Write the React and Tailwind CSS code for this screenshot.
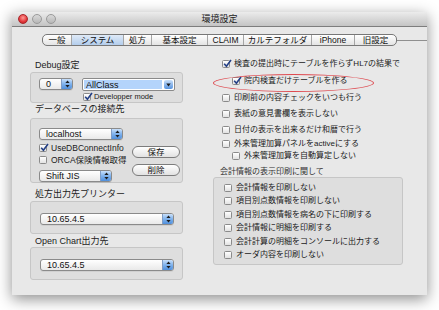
import React from "react";

function Arrows() {
  return (
    <svg width="5" height="8" viewBox="0 0 5 8">
      <path d="M2.5 0.5 L4.6 3 L0.4 3 Z" fill="#1b1b1b" />
      <path d="M2.5 7.5 L4.6 5 L0.4 5 Z" fill="#1b1b1b" />
    </svg>
  );
}

function Popup({ label, className }) {
  return (
    <div
      className={`flex h-[12px] items-stretch rounded-[3px] border border-[#8a8a8a] bg-gradient-to-b from-white to-[#e9e9e9] shadow-[0_1px_0_rgba(0,0,0,0.06)] ${className}`}
    >
      <div className="flex flex-1 items-center pl-[6px] text-[9px] leading-[10px] text-[#111]">
        {label}
      </div>
      <div className="flex w-[11px] items-center justify-center rounded-r-[2px] border-l border-[#7f9cc4] bg-gradient-to-b from-[#c9e0fa] via-[#7fb2ec] to-[#4f8fdc]">
        <Arrows />
      </div>
    </div>
  );
}

function Check({ checked }) {
  return (
    <div className="relative h-[8px] w-[8px] shrink-0 rounded-[1.5px] border border-[#8a8a8a] bg-gradient-to-b from-white to-[#e2e2e2]">
      {checked && (
        <svg
          className="absolute left-[0px] top-[-2px]"
          width="9"
          height="9"
          viewBox="0 0 9 9"
        >
          <path
            d="M1.2 4.8 L3.4 7.2 L8 1"
            fill="none"
            stroke="#233f86"
            strokeWidth="1.6"
          />
        </svg>
      )}
    </div>
  );
}

function Row({ checked, label, className, textClass = "text-[8px]" }) {
  return (
    <div className={`flex h-[12px] items-center gap-[4px] ${className}`}>
      <Check checked={checked} />
      <span className={`whitespace-nowrap leading-[10px] text-[#1a1a1a] ${textClass}`}>
        {label}
      </span>
    </div>
  );
}

function Pill({ label }) {
  return (
    <div className="flex h-[12px] w-[48px] items-center justify-center rounded-full border border-[#7c7c7c] bg-gradient-to-b from-white to-[#e2e2e2] text-[8.5px] leading-[10px] text-[#111]">
      {label}
    </div>
  );
}

const tabs = [
  { t: "一般", w: "w-[28px]" },
  { t: "システム", w: "w-[52px]", sel: true },
  { t: "処方", w: "w-[28px]" },
  { t: "基本設定", w: "w-[56px]" },
  { t: "CLAIM", w: "w-[36px]" },
  { t: "カルテフォルダ", w: "w-[68px]" },
  { t: "iPhone", w: "w-[43px]" },
  { t: "旧設定", w: "w-[42px]" },
];

export default function App() {
  return (
    <div className="h-[310px] w-[439px] overflow-hidden bg-white pl-[12px] pt-[12px] font-['Liberation_Sans','Noto_Sans_CJK_JP',sans-serif]">
      <div className="relative flex h-[283px] w-[415px] flex-col bg-[#e8e8e8] shadow-[0_4px_14px_rgba(0,0,0,0.45)]">
        {/* title bar */}
        <div className="relative flex h-[15px] shrink-0 items-center border-b border-[#7d7d7d] bg-gradient-to-b from-[#ececec] to-[#c4c4c4] pl-[6px]">
          <div className="flex gap-[4px]">
            <div className="h-[10px] w-[10px] rounded-full border border-[#a8262a] bg-[radial-gradient(circle_at_50%_35%,#ff9a95,#e2363a_60%,#b21e22)]" />
            <div className="h-[10px] w-[10px] rounded-full border border-[#9a9a9a] bg-gradient-to-b from-[#d9d9d9] to-[#b8b8b8]" />
            <div className="h-[10px] w-[10px] rounded-full border border-[#9a9a9a] bg-gradient-to-b from-[#d9d9d9] to-[#b8b8b8]" />
          </div>
          <div className="absolute inset-0 flex items-center justify-center text-[9px] leading-[10px] text-[#222]">
            環境設定
          </div>
        </div>

        {/* tab row */}
        <div className="mt-[7px] flex h-[12px] items-center pl-[30px]">
          <div className="flex h-[12px] overflow-hidden rounded-[5px] border border-[#777] bg-gradient-to-b from-white to-[#e4e4e4]">
            {tabs.map((tb, i) => (
              <div
                key={tb.t}
                className={`flex items-center justify-center text-[8.5px] leading-[10px] text-[#111] ${tb.w} ${
                  i > 0 ? "border-l border-[#a5a5a5]" : ""
                } ${tb.sel ? "bg-gradient-to-b from-[#dfeaf7] to-[#b3cdec]" : ""}`}
              >
                {tb.t}
              </div>
            ))}
          </div>
          <div className="h-px flex-1 bg-[#8f8f8f]" />
        </div>

        {/* columns */}
        <div className="mt-[10px] flex pl-[18px]">
          {/* left column */}
          <div className="flex w-[153px] flex-col pt-[4px]">
            <div className="h-[11px] pl-[5px] text-[9px] leading-[11px] text-[#222]">
              Debug設定
            </div>
            <div className="mt-[1px] flex h-[31px] items-start rounded-[3px] border border-[#c6c6c6] bg-[#dedede] pl-[8px] pt-[5px]">
              <Popup label="0" className="w-[34px]" />
              <div className="ml-[9px] flex flex-col">
                <div className="flex h-[13px] w-[93px] items-stretch rounded-[2px] border border-[#8a8a8a] bg-white p-[1px]">
                  <div className="flex flex-1 items-center bg-[#b4d4fb] pl-[2px] text-[9px] leading-[10px] text-[#111]">
                    AllClass
                  </div>
                  <div className="ml-[2px] flex w-[9px] items-center justify-center rounded-[2px] bg-gradient-to-b from-[#c9e0fa] to-[#5592de]">
                    <svg width="5" height="4" viewBox="0 0 5 4">
                      <path d="M0.3 0.5 L4.7 0.5 L2.5 3.6 Z" fill="#1b1b1b" />
                    </svg>
                  </div>
                </div>
                <div className="mt-[1px] flex h-[9px] items-center gap-[3px] pl-[1px]">
                  <Check checked />
                  <span className="text-[7.5px] leading-[9px] text-[#1a1a1a]">
                    Developper mode
                  </span>
                </div>
              </div>
            </div>

            <div className="mt-[1px] h-[11px] pl-[5px] text-[9px] leading-[11px] text-[#222]">
              データベースの接続先
            </div>
            <div className="mt-[3px] flex h-[65px] rounded-[3px] border border-[#c6c6c6] bg-[#dedede] pl-[8px]">
              <div className="flex w-[86px] flex-col pt-[9px]">
                <Popup label="localhost" className="w-[84px]" />
                <Row checked label="UseDBConnectInfo" className="mt-[2px] h-[9px]" textClass="text-[8.5px]" />
                <Row label="ORCA保険情報取得" className="mt-[1px] h-[9px]" textClass="text-[8.5px]" />
                <Popup label="Shift JIS" className="mt-[5px] w-[73px]" />
              </div>
              <div className="ml-[7px] flex flex-col gap-[6px] pt-[27px]">
                <Pill label="保存" />
                <Pill label="削除" />
              </div>
            </div>

            <div className="mt-[6px] h-[11px] pl-[5px] text-[9px] leading-[11px] text-[#222]">
              処方出力先プリンター
            </div>
            <div className="mt-[1px] h-[33px] rounded-[3px] border border-[#c6c6c6] bg-[#dedede] pl-[9px] pt-[11px]">
              <Popup label="10.65.4.5" className="w-[134px]" />
            </div>

            <div className="mt-[2px] h-[11px] pl-[5px] text-[9px] leading-[11px] text-[#222]">
              Open Chart出力先
            </div>
            <div className="h-[33px] rounded-[3px] border border-[#c6c6c6] bg-[#dedede] pl-[9px] pt-[11px]">
              <Popup label="10.65.4.5" className="w-[134px]" />
            </div>
          </div>

          {/* right column */}
          <div className="ml-[30px] flex w-[190px] flex-col pt-[2px]">
            <Row checked label="検査の提出時にテーブルを作らずHL7の結果で" className="pl-[9px]" />
            <Row checked label="院内検査だけテーブルを作る" className="mt-[5px] pl-[19px]" />
            <Row label="印刷前の内容チェックをいつも行う" className="mt-[5px] pl-[9px]" />
            <Row label="表紙の意見書欄を表示しない" className="mt-[4px] pl-[9px]" />
            <Row label="日付の表示を出来るだけ和暦で行う" className="mt-[4px] pl-[9px]" />
            <Row label="外来管理加算パネルをactiveにする" className="mt-[2px] pl-[9px]" />
            <Row label="外来管理加算を自動算定しない" className="pl-[19px]" />
            <div className="mt-[4px] h-[11px] pl-[7px] text-[8px] leading-[11px] text-[#333]">
              会計情報の表示印刷に関して
            </div>
            <div className="flex h-[88px] flex-col rounded-[3px] border border-[#c6c6c6] bg-[#dedede] pl-[10px] pt-[3px]">
              <Row label="会計情報を印刷しない" className="h-[13.5px]" />
              <Row label="項目別点数情報を印刷しない" className="h-[13.5px]" />
              <Row label="項目別点数情報を病名の下に印刷する" className="h-[13.5px]" />
              <Row label="会計情報に明細を印刷する" className="h-[13.5px]" />
              <Row label="会計計算の明細をコンソールに出力する" className="h-[13.5px]" />
              <Row label="オーダ内容を印刷しない" className="h-[13.5px]" />
            </div>
          </div>
        </div>

        {/* red annotation ellipse */}
        <div className="pointer-events-none absolute left-[201px] top-[62px] h-[18px] w-[161px] rounded-[50%] border-[1.5px] border-[#de4a50]" />
      </div>
    </div>
  );
}
